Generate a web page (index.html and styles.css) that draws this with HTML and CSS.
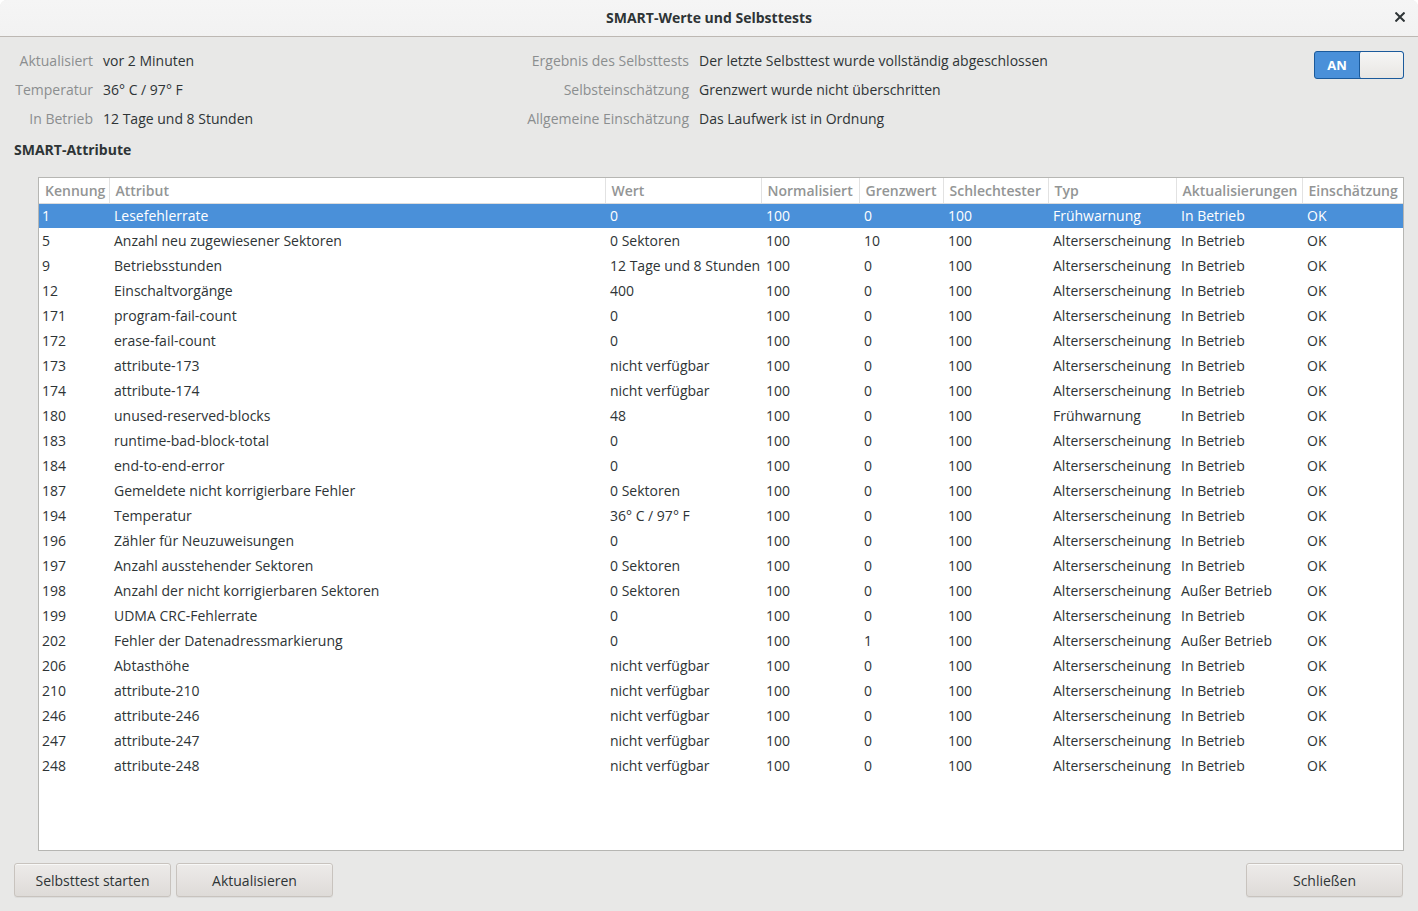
FILE: index.html
```html
<!DOCTYPE html>
<html lang="de">
<head>
<meta charset="utf-8">
<title>SMART-Werte und Selbsttests</title>
<link rel="stylesheet" href="styles.css">
</head>
<body>
<div class="window">
  <header class="titlebar">
    <span class="title">SMART-Werte und Selbsttests</span>
    <span class="close">
      <svg width="10" height="10" viewBox="0 0 10 10"><path d="M1.2 1.2 L8.8 8.8 M8.8 1.2 L1.2 8.8" stroke="#2e3436" stroke-width="2" stroke-linecap="square"/></svg>
    </span>
  </header>
  <main class="content">
    <section class="info">
      <span class="lbl">Aktualisiert</span><span class="val">vor 2 Minuten</span>
      <span class="lbl">Ergebnis des Selbsttests</span><span class="val">Der letzte Selbsttest wurde vollständig abgeschlossen</span>
      <span class="switch"><span class="on">AN</span><span class="knob"></span></span>
      <span class="lbl">Temperatur</span><span class="val">36° C / 97° F</span>
      <span class="lbl">Selbsteinschätzung</span><span class="val">Grenzwert wurde nicht überschritten</span>
      <span class="spacer"></span>
      <span class="lbl">In Betrieb</span><span class="val">12 Tage und 8 Stunden</span>
      <span class="lbl">Allgemeine Einschätzung</span><span class="val">Das Laufwerk ist in Ordnung</span>
      <span class="spacer"></span>
    </section>
    <h2 class="section-title">SMART-Attribute</h2>
    <div class="frame">
      <table class="attrs">
        <colgroup>
          <col class="c1"><col class="c2"><col class="c3"><col class="c4"><col class="c5"><col class="c6"><col class="c7"><col class="c8"><col class="c9">
        </colgroup>
        <thead>
          <tr><th>Kennung</th><th>Attribut</th><th>Wert</th><th>Normalisiert</th><th>Grenzwert</th><th>Schlechtester</th><th>Typ</th><th>Aktualisierungen</th><th class="last">Einschätzung</th></tr>
        </thead>
        <tbody>
          <tr class="sel"><td>1</td><td>Lesefehlerrate</td><td>0</td><td>100</td><td>0</td><td>100</td><td>Frühwarnung</td><td>In Betrieb</td><td>OK</td></tr>
          <tr><td>5</td><td>Anzahl neu zugewiesener Sektoren</td><td>0 Sektoren</td><td>100</td><td>10</td><td>100</td><td>Alterserscheinung</td><td>In Betrieb</td><td>OK</td></tr>
          <tr><td>9</td><td>Betriebsstunden</td><td>12 Tage und 8 Stunden</td><td>100</td><td>0</td><td>100</td><td>Alterserscheinung</td><td>In Betrieb</td><td>OK</td></tr>
          <tr><td>12</td><td>Einschaltvorgänge</td><td>400</td><td>100</td><td>0</td><td>100</td><td>Alterserscheinung</td><td>In Betrieb</td><td>OK</td></tr>
          <tr><td>171</td><td>program-fail-count</td><td>0</td><td>100</td><td>0</td><td>100</td><td>Alterserscheinung</td><td>In Betrieb</td><td>OK</td></tr>
          <tr><td>172</td><td>erase-fail-count</td><td>0</td><td>100</td><td>0</td><td>100</td><td>Alterserscheinung</td><td>In Betrieb</td><td>OK</td></tr>
          <tr><td>173</td><td>attribute-173</td><td>nicht verfügbar</td><td>100</td><td>0</td><td>100</td><td>Alterserscheinung</td><td>In Betrieb</td><td>OK</td></tr>
          <tr><td>174</td><td>attribute-174</td><td>nicht verfügbar</td><td>100</td><td>0</td><td>100</td><td>Alterserscheinung</td><td>In Betrieb</td><td>OK</td></tr>
          <tr><td>180</td><td>unused-reserved-blocks</td><td>48</td><td>100</td><td>0</td><td>100</td><td>Frühwarnung</td><td>In Betrieb</td><td>OK</td></tr>
          <tr><td>183</td><td>runtime-bad-block-total</td><td>0</td><td>100</td><td>0</td><td>100</td><td>Alterserscheinung</td><td>In Betrieb</td><td>OK</td></tr>
          <tr><td>184</td><td>end-to-end-error</td><td>0</td><td>100</td><td>0</td><td>100</td><td>Alterserscheinung</td><td>In Betrieb</td><td>OK</td></tr>
          <tr><td>187</td><td>Gemeldete nicht korrigierbare Fehler</td><td>0 Sektoren</td><td>100</td><td>0</td><td>100</td><td>Alterserscheinung</td><td>In Betrieb</td><td>OK</td></tr>
          <tr><td>194</td><td>Temperatur</td><td>36° C / 97° F</td><td>100</td><td>0</td><td>100</td><td>Alterserscheinung</td><td>In Betrieb</td><td>OK</td></tr>
          <tr><td>196</td><td>Zähler für Neuzuweisungen</td><td>0</td><td>100</td><td>0</td><td>100</td><td>Alterserscheinung</td><td>In Betrieb</td><td>OK</td></tr>
          <tr><td>197</td><td>Anzahl ausstehender Sektoren</td><td>0 Sektoren</td><td>100</td><td>0</td><td>100</td><td>Alterserscheinung</td><td>In Betrieb</td><td>OK</td></tr>
          <tr><td>198</td><td>Anzahl der nicht korrigierbaren Sektoren</td><td>0 Sektoren</td><td>100</td><td>0</td><td>100</td><td>Alterserscheinung</td><td>Außer Betrieb</td><td>OK</td></tr>
          <tr><td>199</td><td>UDMA CRC-Fehlerrate</td><td>0</td><td>100</td><td>0</td><td>100</td><td>Alterserscheinung</td><td>In Betrieb</td><td>OK</td></tr>
          <tr><td>202</td><td>Fehler der Datenadressmarkierung</td><td>0</td><td>100</td><td>1</td><td>100</td><td>Alterserscheinung</td><td>Außer Betrieb</td><td>OK</td></tr>
          <tr><td>206</td><td>Abtasthöhe</td><td>nicht verfügbar</td><td>100</td><td>0</td><td>100</td><td>Alterserscheinung</td><td>In Betrieb</td><td>OK</td></tr>
          <tr><td>210</td><td>attribute-210</td><td>nicht verfügbar</td><td>100</td><td>0</td><td>100</td><td>Alterserscheinung</td><td>In Betrieb</td><td>OK</td></tr>
          <tr><td>246</td><td>attribute-246</td><td>nicht verfügbar</td><td>100</td><td>0</td><td>100</td><td>Alterserscheinung</td><td>In Betrieb</td><td>OK</td></tr>
          <tr><td>247</td><td>attribute-247</td><td>nicht verfügbar</td><td>100</td><td>0</td><td>100</td><td>Alterserscheinung</td><td>In Betrieb</td><td>OK</td></tr>
          <tr><td>248</td><td>attribute-248</td><td>nicht verfügbar</td><td>100</td><td>0</td><td>100</td><td>Alterserscheinung</td><td>In Betrieb</td><td>OK</td></tr>
        </tbody>
      </table>
    </div>
    <footer class="actions">
      <button class="btn">Selbsttest starten</button>
      <button class="btn">Aktualisieren</button>
      <span class="grow"></span>
      <button class="btn">Schließen</button>
    </footer>
  </main>
</div>
</body>
</html>
```
FILE: styles.css
```css
* { box-sizing: border-box; }
html, body { margin: 0; padding: 0; background: #ffffff; }
body {
  font-family: "Open Sans", "Noto Sans", sans-serif;
  font-size: 14px;
  color: #2e3436;
}
.window {
  width: 1418px;
  height: 911px;
  display: flex;
  flex-direction: column;
  background: #e8e8e7;
  border-radius: 7px 7px 0 0;
  overflow: hidden;
}
.titlebar {
  height: 37px;
  flex: none;
  display: flex;
  align-items: center;
  justify-content: center;
  position: relative;
  padding-bottom: 2px;
  background: linear-gradient(#f5f5f5, #f2f2f2);
  border-bottom: 1px solid #bdb8b3;
}
.title { font-weight: 700; font-size: 14px; }
.close {
  position: absolute;
  right: 13px;
  top: 12px;
  width: 10px;
  height: 10px;
  display: flex;
}
.content {
  flex: 1;
  display: flex;
  flex-direction: column;
  padding: 9px 14px 14px 14px;
}
.info {
  display: grid;
  grid-template-columns: 79px 400px 176px auto 1fr;
  grid-auto-rows: 29px;
  column-gap: 10px;
  align-items: center;
}
.lbl { text-align: right; color: #8b8e8f; white-space: nowrap; }
.val { white-space: nowrap; }
.switch {
  justify-self: end;
  align-self: start;
  margin-top: 5px;
  width: 90px;
  height: 28px;
  display: flex;
  border: 1px solid #1b5a9b;
  border-radius: 3px;
  overflow: hidden;
  background: #4a90d9;
}
.switch .on {
  width: 44px;
  color: #ffffff;
  font-weight: 700;
  font-size: 13px;
  display: flex;
  align-items: center;
  justify-content: center;
}
.switch .knob {
  flex: 1;
  background: linear-gradient(#f6f6f5, #e8e6e3);
  border-left: 1px solid #1b5a9b;
  border-radius: 2px;
}
.section-title {
  margin: 7px 0 17px 0;
  height: 20px;
  font-size: 14px;
  font-weight: 700;
  line-height: 20px;
}
.frame {
  margin-left: 24px;
  flex: 1;
  background: #ffffff;
  border: 1px solid #b6b6b3;
  margin-bottom: 12px;
  overflow: hidden;
}
.attrs {
  width: 100%;
  table-layout: fixed;
  border-collapse: collapse;
}
.c1 { width: 70px; } .c2 { width: 496px; } .c3 { width: 156px; }
.c4 { width: 98px; } .c5 { width: 84px; } .c6 { width: 105px; }
.c7 { width: 128px; } .c8 { width: 126px; } .c9 { width: auto; }
.attrs th {
  height: 25px;
  padding: 0 0 0 6px;
  text-align: left;
  font-weight: 600;
  color: #939595;
  white-space: nowrap;
  overflow: hidden;
  border-bottom: 1px solid #dcdcdc;
  border-right: 1px solid #e2e2e2;
  background: #ffffff;
}
.attrs th.last { border-right: none; }
.attrs td {
  height: 25px;
  padding: 0 0 0 5px;
  white-space: nowrap;
  overflow: hidden;
}
.attrs td:first-child { padding-left: 3px; }
.attrs tr.sel td { background: #4a90d9; color: #ffffff; }
.actions {
  display: flex;
  gap: 5px;
  padding-right: 1px;
}
.grow { flex: 1; }
.btn {
  width: 157px;
  height: 34px;
  font-family: inherit;
  font-size: 14px;
  color: #2e3436;
  background: linear-gradient(#edebe9, #dedbd8);
  border: 1px solid #c8c3be;
  border-radius: 3px;
  box-shadow: inset 0 1px #f8f8f7, 0 1px rgba(0,0,0,0.05);
}
```
